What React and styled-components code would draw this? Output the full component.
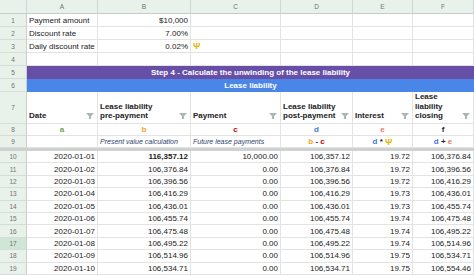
import React from 'react';
import styled, { createGlobalStyle } from 'styled-components';

const GlobalStyle = createGlobalStyle`
  body {
    margin: 0;
    background: #ffffff;
    font-family: 'Liberation Sans', Arial, sans-serif;
    overflow: hidden;
  }
`;

const Sheet = styled.div`
  width: 474px;
  height: 275px;
  overflow: hidden;
  display: flex;
  flex-direction: column;
`;

const Row = styled.div`
  display: grid;
  grid-template-columns: 27px 71px 93px 90px 72px 60px 1fr;
  height: ${(p) => p.$h}px;
  flex: none;
`;

const Cell = styled.div`
  grid-column: span ${(p) => p.$span || 1};
  box-sizing: border-box;
  border-right: 1px solid #e3e3e3;
  border-bottom: 1px solid #e3e3e3;
  padding: 0 2px;
  display: flex;
  align-items: center;
  justify-content: ${(p) => (p.$align === 'right' ? 'flex-end' : p.$align === 'center' ? 'center' : 'flex-start')};
  font-size: ${(p) => (p.$italic ? 7 : 8)}px;
  color: ${(p) => p.$color || '#222222'};
  font-weight: ${(p) => (p.$bold ? 700 : 400)};
  font-style: ${(p) => (p.$italic ? 'italic' : 'normal')};
  white-space: nowrap;
  overflow: hidden;
`;

const RowHead = styled.div`
  box-sizing: border-box;
  background: ${(p) => (p.$active ? '#cfe5d5' : '#e9f1eb')};
  border-right: 1px solid #c9d0cb;
  border-bottom: 1px solid #d6dcd7;
  color: #6d736f;
  font-size: 6.5px;
  display: flex;
  align-items: center;
  justify-content: center;
`;

const ColHead = styled(RowHead)`
  border-bottom: 1px solid #c6ccc7;
  border-right: 1px solid #d0d6d1;
`;

const Banner = styled.div`
  grid-column: span 6;
  background: ${(p) => p.$bg};
  color: #ffffff;
  font-size: 8px;
  font-weight: 700;
  display: flex;
  align-items: center;
  justify-content: center;
  border-bottom: 1px solid ${(p) => p.$bg};
`;

const HeadCell = styled(Cell)`
  align-items: flex-end;
  justify-content: space-between;
  white-space: normal;
  line-height: 9.7px;
  font-weight: 700;
  padding-bottom: 2px;
`;

const Filter = styled.svg`
  flex: none;
  margin: 0 1px 2px 2px;
`;

const Letter = styled.span`
  color: ${(p) => p.$color};
  font-weight: 700;
`;

const Psi = styled.span`
  color: #e2b400;
  font-weight: 700;
  font-size: 9px;
`;

const Freeze = styled.div`
  height: 3px;
  flex: none;
  background: #cfd1d0;
`;

const FilterIcon = () => (
  <Filter width="8" height="6" viewBox="0 0 8 6">
    <path d="M0 0H8L5 3.2V6H3V3.2Z" fill="#a8b9b4" />
  </Filter>
);

const C = {
  a: '#6aa84f',
  b: '#f1a21c',
  c: '#cc0000',
  d: '#3c78d8',
  e: '#e07b73',
};

const data = [
  ['2020-01-01', '116,357.12', '10,000.00', '106,357.12', '19.72', '106,376.84'],
  ['2020-01-02', '106,376.84', '0.00', '106,376.84', '19.72', '106,396.56'],
  ['2020-01-03', '106,396.56', '0.00', '106,396.56', '19.72', '106,416.29'],
  ['2020-01-04', '106,416.29', '0.00', '106,416.29', '19.73', '106,436.01'],
  ['2020-01-05', '106,436.01', '0.00', '106,436.01', '19.73', '106,455.74'],
  ['2020-01-06', '106,455.74', '0.00', '106,455.74', '19.74', '106,475.48'],
  ['2020-01-07', '106,475.48', '0.00', '106,475.48', '19.74', '106,495.22'],
  ['2020-01-08', '106,495.22', '0.00', '106,495.22', '19.74', '106,514.96'],
  ['2020-01-09', '106,514.96', '0.00', '106,514.96', '19.75', '106,534.71'],
  ['2020-01-10', '106,534.71', '0.00', '106,534.71', '19.75', '106,554.46'],
];

const inputs = [
  ['Payment amount', '$10,000', null],
  ['Discount rate', '7.00%', null],
  ['Daily discount rate', '0.02%', <Psi>Ψ</Psi>],
];

const App = () => (
  <Sheet>
    <GlobalStyle />
    <Row $h={14}>
      <ColHead />
      {['A', 'B', 'C', 'D', 'E', 'F'].map((l) => (
        <ColHead key={l}>{l}</ColHead>
      ))}
    </Row>

    {inputs.map(([label, value, extra], i) => (
      <Row $h={13} key={label}>
        <RowHead>{i + 1}</RowHead>
        <Cell>{label}</Cell>
        <Cell $align="right">{value}</Cell>
        <Cell>{extra}</Cell>
        <Cell />
        <Cell />
        <Cell />
      </Row>
    ))}

    <Row $h={13}>
      <RowHead>4</RowHead>
      <Cell /><Cell /><Cell /><Cell /><Cell /><Cell />
    </Row>

    <Row $h={13}>
      <RowHead>5</RowHead>
      <Banner $bg="#674ea7">Step 4 - Calculate the unwinding of the lease liability</Banner>
    </Row>
    <Row $h={13}>
      <RowHead>6</RowHead>
      <Banner $bg="#4a86e8">Lease liability</Banner>
    </Row>

    <Row $h={32}>
      <RowHead>7</RowHead>
      <HeadCell><span>Date</span><FilterIcon /></HeadCell>
      <HeadCell><span>Lease liability<br />pre-payment</span><FilterIcon /></HeadCell>
      <HeadCell><span>Payment</span><FilterIcon /></HeadCell>
      <HeadCell><span>Lease liability<br />post-payment</span><FilterIcon /></HeadCell>
      <HeadCell><span>Interest</span><FilterIcon /></HeadCell>
      <HeadCell><span>Lease<br />liability<br />closing</span><FilterIcon /></HeadCell>
    </Row>

    <Row $h={12}>
      <RowHead>8</RowHead>
      <Cell $align="center"><Letter $color={C.a}>a</Letter></Cell>
      <Cell $align="center"><Letter $color={C.b}>b</Letter></Cell>
      <Cell $align="center"><Letter $color={C.c}>c</Letter></Cell>
      <Cell $align="center"><Letter $color={C.d}>d</Letter></Cell>
      <Cell $align="center"><Letter $color={C.e}>e</Letter></Cell>
      <Cell $align="center"><Letter $color="#222">f</Letter></Cell>
    </Row>

    <Row $h={12}>
      <RowHead>9</RowHead>
      <Cell />
      <Cell $italic $color="#2f4470">Present value calculation</Cell>
      <Cell $italic $color="#2f4470">Future lease payments</Cell>
      <Cell $align="center">
        <Letter $color={C.b}>b</Letter>&nbsp;<b>-</b>&nbsp;<Letter $color={C.c}>c</Letter>
      </Cell>
      <Cell $align="center">
        <Letter $color={C.d}>d</Letter>&nbsp;<b>*</b>&nbsp;<Psi>Ψ</Psi>
      </Cell>
      <Cell $align="center">
        <Letter $color={C.d}>d</Letter>&nbsp;<b>+</b>&nbsp;<Letter $color={C.e}>e</Letter>
      </Cell>
    </Row>

    <Freeze />

    {data.map((r, i) => (
      <Row $h={12.4} key={r[0]}>
        <RowHead $active={i === 7}>{i + 10}</RowHead>
        {r.map((v, j) => (
          <Cell key={j} $align="right" $bold={i === 0 && j === 1}>{v}</Cell>
        ))}
      </Row>
    ))}
  </Sheet>
);

export default App;
